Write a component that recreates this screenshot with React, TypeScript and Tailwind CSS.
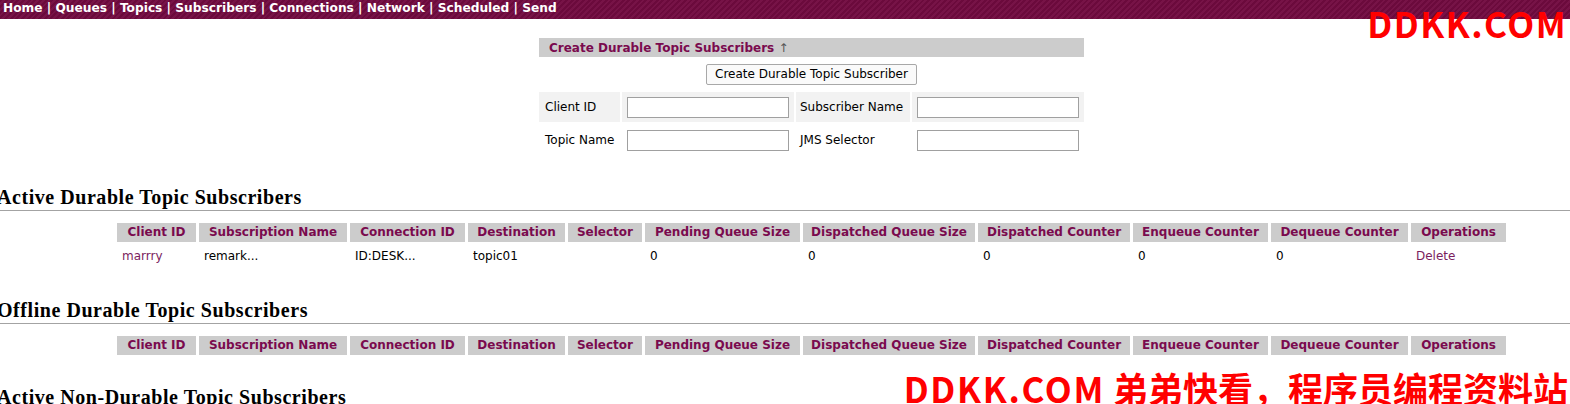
import React from "react";

const cols = [
  { name: "Client ID", w: "w-[79px]" },
  { name: "Subscription Name", w: "w-[148px]" },
  { name: "Connection ID", w: "w-[115px]" },
  { name: "Destination", w: "w-[97px]" },
  { name: "Selector", w: "w-[74px]" },
  { name: "Pending Queue Size", w: "w-[155px]" },
  { name: "Dispatched Queue Size", w: "w-[172px]" },
  { name: "Dispatched Counter", w: "w-[152px]" },
  { name: "Enqueue Counter", w: "w-[135px]" },
  { name: "Dequeue Counter", w: "w-[137px]" },
  { name: "Operations", w: "w-[95px]" },
];

const activeRow = ["marrry", "remark...", "ID:DESK...", "topic01", "", "0", "0", "0", "0", "0", "Delete"];

const nav = ["Home", "Queues", "Topics", "Subscribers", "Connections", "Network", "Scheduled", "Send"];

const markFont = { fontFamily: '"Noto Sans CJK SC", "Noto Sans", sans-serif' };

function SectionTitle({ children, top }: { children: React.ReactNode; top: string }) {
  return (
    <h2
      className={`${top} -ml-[3px] border-b border-[#a3a3a3] pb-[1px] text-[20px] leading-[24px] font-bold tracking-[0.55px] text-black whitespace-nowrap`}
      style={{ fontFamily: '"Liberation Serif", Georgia, serif' }}
    >
      {children}
    </h2>
  );
}

function SubTable({ rows }: { rows: string[][] }) {
  return (
    <div className="ml-[117px] mt-[12px] flex flex-col gap-[3px]">
      <div className="flex gap-[3px]">
        {cols.map((c) => (
          <div
            key={c.name}
            className={`${c.w} h-[19px] bg-[#cccccc] text-center text-[12px] leading-[19px] font-bold text-[#7a0a4e] whitespace-nowrap`}
          >
            {c.name}
          </div>
        ))}
      </div>
      {rows.map((r, i) => (
        <div key={i} className="flex gap-[3px]">
          {cols.map((c, j) => (
            <div
              key={c.name}
              className={`${c.w} h-[22px] px-[5px] text-[12px] leading-[22px] whitespace-nowrap ${
                j === 0 || j === 10 ? "text-[#7b1d5e]" : "text-black"
              }`}
            >
              {r[j]}
            </div>
          ))}
        </div>
      ))}
    </div>
  );
}

export default function App() {
  return (
    <div
      className="relative w-[1570px] h-[404px] overflow-hidden bg-white"
      style={{ fontFamily: '"DejaVu Sans", Verdana, sans-serif' }}
    >
      {/* menu */}
      <div className="h-[19px] px-[3px] bg-[repeating-linear-gradient(135deg,#6b0a3c_0px,#6b0a3c_2px,#771347_2px,#771347_4px)] text-[12.2px] leading-[17px] font-bold text-white whitespace-nowrap">
        {nav.map((n, i) => (
          <span key={n}>
            {n}
            {i < nav.length - 1 && " | "}
          </span>
        ))}
      </div>

      {/* create form */}
      <div className="ml-[539px] mt-[19px] w-[545px]">
        <div className="h-[19px] bg-[#cccccc] pl-[10px] text-[12px] leading-[20px] font-bold text-[#7a0a4e]">
          Create Durable Topic Subscribers <span className="font-normal text-[#555]">↑</span>
        </div>
        <div className="flex justify-center pt-[7px]">
          <button className="h-[21px] w-[211px] border border-[#a8a8a8] bg-[#fafafa] text-[12px] leading-[19px] text-black rounded-[2px]">
            Create Durable Topic Subscriber
          </button>
        </div>
        <div className="mt-[7px] flex flex-col gap-[3px] text-[12px] text-black">
          <div className="flex h-[30px] gap-[2px]">
            <div className="w-[81px] bg-[#f2f2f2] pl-[6px] leading-[31px]">Client ID</div>
            <div className="w-[172px] bg-[#f2f2f2] flex items-center pl-[5px]">
              <div className="h-[21px] w-[162px] border border-[#a0a0a0] bg-white" />
            </div>
            <div className="w-[114px] bg-[#f2f2f2] pl-[4px] leading-[31px]">Subscriber Name</div>
            <div className="w-[172px] bg-[#f2f2f2] flex items-center pl-[5px]">
              <div className="h-[21px] w-[162px] border border-[#a0a0a0] bg-white" />
            </div>
          </div>
          <div className="flex h-[30px] gap-[2px]">
            <div className="w-[81px] pl-[6px] leading-[31px]">Topic Name</div>
            <div className="w-[172px] flex items-center pl-[5px]">
              <div className="h-[21px] w-[162px] border border-[#a0a0a0] bg-white" />
            </div>
            <div className="w-[114px] pl-[4px] leading-[31px]">JMS Selector</div>
            <div className="w-[172px] flex items-center pl-[5px]">
              <div className="h-[21px] w-[162px] border border-[#a0a0a0] bg-white" />
            </div>
          </div>
        </div>
      </div>

      <SectionTitle top="mt-[30px]">Active Durable Topic Subscribers</SectionTitle>
      <SubTable rows={[activeRow]} />

      <SectionTitle top="mt-[31px]">Offline Durable Topic Subscribers</SectionTitle>
      <SubTable rows={[]} />

      <SectionTitle top="mt-[30px]">Active Non-Durable Topic Subscribers</SectionTitle>

      {/* watermarks */}
      <div
        className="absolute right-[3px] top-[1px] text-[35px] leading-[44px] font-bold tracking-[1.5px] text-[#ff0000] whitespace-nowrap"
        style={markFont}
      >
        DDKK.COM
      </div>
      <div
        className="absolute right-[2px] bottom-[-6px] text-[35px] leading-[44px] font-bold text-[#ff0000] whitespace-nowrap"
        style={markFont}
      >
        <span className="tracking-[1.7px]">DDKK.COM</span> 弟弟快看，程序员编程资料站
      </div>
    </div>
  );
}
